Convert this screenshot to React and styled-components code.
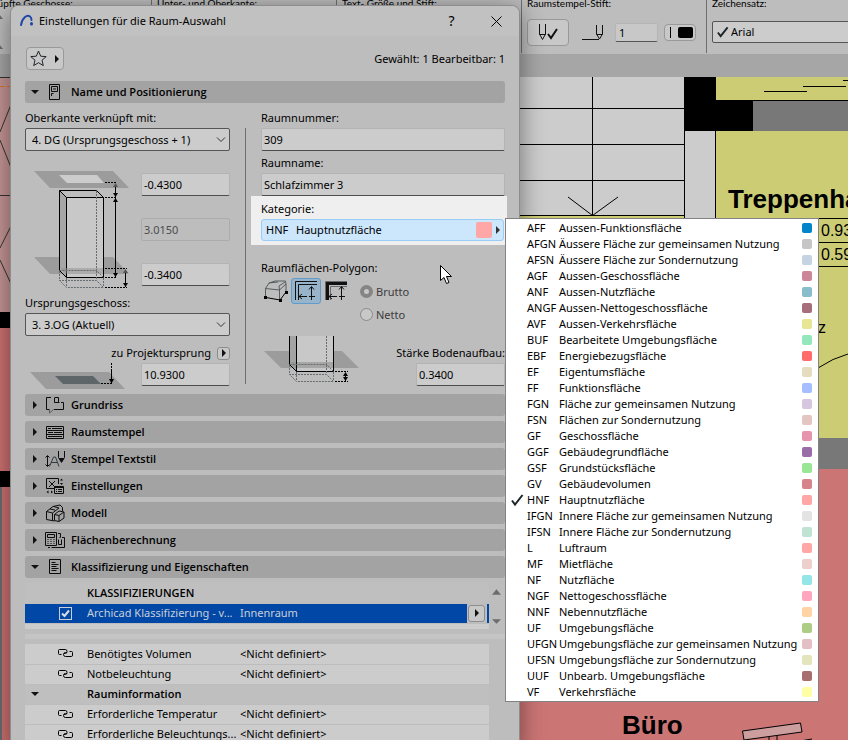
import { Fragment } from "react";
import styled, { createGlobalStyle } from "styled-components";

const GlobalStyle = createGlobalStyle`
  * {
    box-sizing: border-box;
  }
  body {
    margin: 0;
    overflow: hidden;
    color: #000;
    font-family: "Noto Sans", "Open Sans", sans-serif;
    font-size: 11px;
    line-height: 16px;
  }
  button, input, select {
    font: inherit;
    color: inherit;
    margin: 0;
  }
  svg {
    display: block;
    flex: none;
  }
`;

const Desktop = styled.div`
  position: relative;
  display: flex;
  flex-direction: column;
  height: 100vh;
  overflow: hidden;
  background: #cccccc;
`;

/* ---- info bar ---- */
const InfoBar = styled.div`
  display: grid;
  grid-template-columns: repeat(5, 185px);
  flex: none;
  height: 54px;
  margin-left: -34px;
  background: #bdbdbd;
`;
const InfoSection = styled.section`
  height: 53px;
  padding-left: 5px;
  border-left: 1px solid #6f6f6f;
  white-space: nowrap;
`;
const InfoTitle = styled.div`
  display: block;
  height: 16px;
  margin-top: -5px;
  font-family: Lato, "Noto Sans", sans-serif;
  font-size: 10px;
`;
const InfoTools = styled.div`
  display: flex;
  align-items: center;
  height: 42px;
`;
const InfoButton = styled.button`
  display: flex;
  align-items: center;
  justify-content: center;
  width: ${(props) => props.$width}px;
  height: ${(props) => props.$height}px;
  padding: 0;
  border: 1px solid #999999;
  border-radius: 4px;
  background: #c8c8c8;
`;
const PenIcon = styled.svg`
  margin: 0 11px 0 13px;
`;
const PenInput = styled.input`
  width: 43px;
  height: 19px;
  margin-right: 6px;
  padding: 0 3px;
  border: 1px solid #b5b5b5;
  border-bottom-color: #555;
  border-radius: 2px;
  background: #c8c8c8;
`;
const ScrollMarks = styled.div`
  display: flex;
  flex-direction: column;
  gap: 22px;
  margin: 2px 0 0 23px;
`;
const Strip = styled.div`
  flex: none;
  height: 23px;
  background: #a6a6a6;
`;
const Plan = styled.svg`
  flex: 1;
  width: 100%;
  min-height: 0;
  font-family: "Liberation Sans", Arial, sans-serif;
`;

/* ---- dialog ---- */
const Dialog = styled.form`
  position: absolute;
  top: 5px;
  left: 10px;
  bottom: -10px;
  width: calc(100% - 20px);
  max-width: 510px;
  border: 1px solid #8d8d8d;
  border-radius: 8px 8px 0 0;
  background: #bdbdbd;
  box-shadow: 0 4px 24px rgba(0, 0, 0, 0.45);
`;
const TitleBar = styled.header`
  display: flex;
  align-items: center;
  height: 30px;
  padding: 0 0 0 8px;
  border-radius: 8px 8px 0 0;
  background: #c1c1c1;
`;
const Title = styled.h1`
  flex: 1;
  margin: 0 0 0 4px;
  font-size: 11px;
  font-weight: 400;
`;
const TitleButton = styled.button`
  display: flex;
  align-items: center;
  justify-content: center;
  width: 45px;
  height: 30px;
  padding: 0;
  border: 0;
  background: none;
  font-size: 14px;
`;
const Content = styled.div`
  padding: 11px 14px 0;
`;
const TopRow = styled.div`
  display: flex;
  align-items: center;
  justify-content: space-between;
  margin-bottom: 11px;
  padding-left: 1px;
`;
const StarButton = styled.button`
  display: flex;
  align-items: center;
  justify-content: center;
  gap: 6px;
  width: 38px;
  height: 23px;
  padding: 0;
  border: 1px solid #999999;
  border-radius: 4px;
  background: #c8c8c8;
`;
const SectionButton = styled.button`
  display: flex;
  align-items: center;
  gap: 5px;
  width: 100%;
  height: 22px;
  margin-bottom: 5px;
  padding: 0 6px;
  border: 0;
  border-radius: 3px;
  background: #a3a3a3;
  font-family: "Open Sans", "Noto Sans", sans-serif;
  font-weight: 600;
  text-align: left;
`;
const Body = styled.div`
  display: grid;
  grid-template-columns: 205px 1px minmax(0, 1fr);
  column-gap: 15px;
  margin-bottom: 8px;
`;
const Separator = styled.div`
  margin: 20px 0 2px;
  background: #6f6f6f;
`;
const Column = styled.div`
  display: flex;
  flex-direction: column;
`;
const Label = styled.label`
  height: 20px;
  line-height: 20px;
  white-space: nowrap;
`;
const TextInput = styled.input`
  width: 100%;
  height: 23px;
  padding: 0 2px;
  border: 1px solid #b3b3b3;
  border-bottom-color: #4d4d4d;
  border-radius: 2px;
  background: #cccccc;
  &:disabled {
    border-color: #acacac;
    background: #bdbdbd;
    color: #4d4d4d;
  }
`;
const FieldGroup = styled.div`
  display: flex;
  flex-direction: column;
  margin-bottom: 2px;
`;
const SelectWrap = styled.div`
  position: relative;
  flex: 1;
`;
const Select = styled.select`
  appearance: none;
  width: 100%;
  height: ${(props) => props.$height || 23}px;
  padding: 0 24px 0 ${(props) => props.$indent || 6}px;
  border: 1px solid #555;
  border-radius: 2px;
  background: #cccccc;
`;
const SelectMark = styled.svg`
  position: absolute;
  top: 50%;
  ${(props) => (props.$left ? "left: 4px;" : "right: 4px;")}
  transform: translateY(-50%);
  pointer-events: none;
`;
const Heights = styled.div`
  display: grid;
  grid-template-columns: 116px 1fr;
  margin-top: 20px;
`;
const HeightInputs = styled.div`
  display: flex;
  flex-direction: column;
  gap: 22px;
  padding-top: 2px;
  height: 122px;
`;
const OriginRow = styled.div`
  display: flex;
  align-items: center;
  justify-content: flex-end;
  gap: 6px;
  height: 20px;
  margin-top: 7px;
`;
const MiniButton = styled.button`
  display: flex;
  align-items: center;
  justify-content: center;
  width: ${(props) => props.$size}px;
  height: ${(props) => props.$size}px;
  padding: 0;
  border: 1px solid #8d8d8d;
  border-radius: 3px;
  background: #c8c8c8;
`;
const Origin = styled.div`
  display: grid;
  grid-template-columns: 116px 1fr;
  height: 23px;
`;

const Highlight = styled.div`
  margin: -2px -2px 0 -10px;
  padding: 3px 3px 4px 10px;
  background: #efefef;
`;
const Picker = styled.div`
  position: relative;
`;
const PickerButton = styled.button`
  display: flex;
  align-items: center;
  width: 100%;
  height: 22px;
  padding: 0 1px 0 4px;
  border: 1px solid #99cdf7;
  border-radius: 3px;
  background: #cce6fc;
  text-align: left;
`;
const PickerCode = styled.span`
  width: 30px;
`;
const PickerName = styled.span`
  flex: 1;
`;
const Swatch = styled.span`
  width: ${(props) => props.$size}px;
  height: ${(props) => props.$size}px;
  margin-right: ${(props) => (props.$size > 10 ? 2 : 0)}px;
  border-radius: 2px;
  background: ${(props) => props.$color};
`;
const Menu = styled.ul`
  position: absolute;
  z-index: 2;
  top: -1px;
  left: 100%;
  width: 314px;
  margin: 0 0 0 1px;
  padding: 1px 0;
  border: 1px solid #838383;
  background: #ffffff;
  list-style: none;
`;
const MenuItem = styled.button`
  display: grid;
  grid-template-columns: 21px 32px 1fr 10px;
  align-items: center;
  width: 100%;
  height: 16px;
  padding: 0 6px 0 0;
  border: 0;
  background: none;
  text-align: left;
  white-space: nowrap;
`;

const PolygonLabel = styled(Label)`
  margin-top: 13px;
`;
const PolygonRow = styled.div`
  display: flex;
  height: 48px;
`;
const ToolButton = styled.button`
  display: flex;
  align-items: center;
  justify-content: center;
  width: 30px;
  height: 26px;
  padding: 0;
  border: 1px solid ${(props) => (props.$active ? "#5f9bcb" : "transparent")};
  border-radius: 3px;
  background: ${(props) => (props.$active ? "#97b4cb" : "none")};
`;
const Radios = styled.div`
  display: flex;
  flex-direction: column;
  margin-left: 9px;
  padding-top: 2px;
`;
const RadioLabel = styled.label`
  display: flex;
  align-items: center;
  gap: 3px;
  height: 23px;
  color: #3c3c3c;
`;
const Radio = styled.input`
  appearance: none;
  width: 13px;
  height: 13px;
  border: 1px solid #8a8a8a;
  border-radius: 50%;
  background: #c8c8c8;
  &:checked {
    border: 4px solid #858585;
  }
`;
const FloorRow = styled.div`
  display: flex;
  align-items: flex-end;
  justify-content: space-between;
  margin-top: auto;
`;
const FloorField = styled.div`
  display: flex;
  flex-direction: column;
  align-items: flex-end;
  width: 110px;
`;
const FloorInput = styled(TextInput)`
  width: 89px;
`;

/* ---- property lists ---- */
const ClassRow = styled.div`
  display: flex;
  align-items: flex-start;
  height: 46px;
  margin-right: 1px;
  background: #cccccc;
`;
const Table = styled.table`
  flex: 1;
  width: ${(props) => props.$width || "auto"};
  table-layout: fixed;
  border-collapse: collapse;
  background: #cccccc;
  td, th {
    height: 20px;
    padding: 0 0 0 2px;
    overflow: hidden;
    text-align: left;
    text-overflow: ellipsis;
    white-space: nowrap;
  }
  th {
    font-family: "Open Sans", "Noto Sans", sans-serif;
    font-weight: 600;
  }
`;
const Row = styled.tr`
  border-bottom: 1px solid #bdbdbd;
  background: ${(props) => (props.$group ? "#bfbfbf" : props.$selected ? "#0047a6" : "#cccccc")};
  color: ${(props) => (props.$selected ? "#c9cfd8" : "#000")};
`;
const IconCell = styled.div`
  display: flex;
  justify-content: ${(props) => (props.$start ? "flex-start" : "center")};
  padding-left: ${(props) => (props.$start ? 4 : 18)}px;
`;
const Checkbox = styled.input`
  appearance: none;
  width: 13px;
  height: 13px;
  border: 1px solid #c9cfd8;
  background: url("data:image/svg+xml,%3Csvg xmlns='http://www.w3.org/2000/svg' viewBox='0 0 11 11'%3E%3Cpath d='M2 5.5 4.5 8 9 2.5' fill='none' stroke='%23d8dde3' stroke-width='2'/%3E%3C/svg%3E");
`;
const ButtonCell = styled.div`
  display: flex;
  justify-content: center;
  width: 20px;
  margin-left: -2px;
  padding: 1px 0;
  background: #bdbdbd;
`;
const Scroll = styled.div`
  display: flex;
  flex-direction: column;
  align-items: center;
  gap: 20px;
  width: 15px;
  height: 46px;
  padding-top: 5px;
  background: #bdbdbd;
`;
const Gap = styled.div`
  height: 5px;
  margin: 5px 0;
  background: #c4c4c4;
`;

const CATEGORIES = [
  ["AFF", "Aussen-Funktionsfläche", "#0085ca"],
  ["AFGN", "Äussere Fläche zur gemeinsamen Nutzung", "#c6c6c6"],
  ["AFSN", "Äussere Fläche zur Sondernutzung", "#c6d3e3"],
  ["AGF", "Aussen-Geschossfläche", "#cc8599"],
  ["ANF", "Aussen-Nutzfläche", "#8abdcc"],
  ["ANGF", "Aussen-Nettogeschossfläche", "#a66e7c"],
  ["AVF", "Aussen-Verkehrsfläche", "#e6e694"],
  ["BUF", "Bearbeitete Umgebungsfläche", "#94e6bd"],
  ["EBF", "Energiebezugsfläche", "#ff6b6b"],
  ["EF", "Eigentumsfläche", "#e6dcc0"],
  ["FF", "Funktionsfläche", "#a6bdff"],
  ["FGN", "Fläche zur gemeinsamen Nutzung", "#d6c6e0"],
  ["FSN", "Flächen zur Sondernutzung", "#e3c6c2"],
  ["GF", "Geschossfläche", "#e694ad"],
  ["GGF", "Gebäudegrundfläche", "#996ea8"],
  ["GSF", "Grundstücksfläche", "#99e694"],
  ["GV", "Gebäudevolumen", "#d6838b"],
  ["HNF", "Hauptnutzfläche", "#ffa6a6"],
  ["IFGN", "Innere Fläche zur gemeinsamen Nutzung", "#e3e3e3"],
  ["IFSN", "Innere Fläche zur Sondernutzung", "#c0e3d3"],
  ["L", "Luftraum", "#ffa6a6"],
  ["MF", "Mietfläche", "#ebd0cc"],
  ["NF", "Nutzfläche", "#94e6e6"],
  ["NGF", "Nettogeschossfläche", "#ffa6bf"],
  ["NNF", "Nebennutzfläche", "#ffd3a6"],
  ["UF", "Umgebungsfläche", "#adcc85"],
  ["UFGN", "Umgebungsfläche zur gemeinsamen Nutzung", "#e3c0c6"],
  ["UFSN", "Umgebungsfläche zur Sondernutzung", "#e3e6bd"],
  ["UUF", "Unbearb. Umgebungsfläche", "#a66e6e"],
  ["VF", "Verkehrsfläche", "#ffffa6"],
];

const SECTIONS = [
  ["plan", "Grundriss"],
  ["stamp", "Raumstempel"],
  ["text", "Stempel Textstil"],
  ["settings", "Einstellungen"],
  ["model", "Modell"],
  ["calc", "Flächenberechnung"],
];

const PROPERTIES = [
  { name: "Benötigtes Volumen" },
  { name: "Notbeleuchtung" },
  { name: "Rauminformation", group: true },
  { name: "Erforderliche Temperatur" },
  { name: "Erforderliche Beleuchtungs..." },
];

const ICONS = {
  zone: (
    <>
      <path d="M5.500 3.500h10v15h-10z" />
      <path d="M7.500 5.500h6v5h-6zM9 8h3M7.500 15v-2.500h2" />
    </>
  ),
  plan: (
    <>
      <path d="M7 3.500H2.500v12H5M11 3.500h3.500v5M17 8.500h2.500v7H10" />
      <path d="M10.500 3.500v5h5" />
      <path d="M5.500 15v4l4-3.500" stroke="#555d60" />
    </>
  ),
  stamp: (
    <path d="M2.500 5.500h17v12h-17zM2.500 9.500h17M2.500 13.500h17M4 7.500h3M8 7.500h10M4 11.500h5M10 11.500h8M4 15.500h14" />
  ),
  text: (
    <>
      <path d="M3.500 8v10M1.500 9.500l2-2 2 2M1.500 16.500l2 2 2-2" />
      <path d="M5.500 18.500 9.500 9h2l3.500 9.500M7 14.500h6" stroke="#333b3e" />
      <path d="M14.500 3v6.500l3 5 3-5V3M15 10.500h5" />
      <path d="M16 11.500h3l-1.500 2z" fill="#111" />
    </>
  ),
  settings: (
    <>
      <path d="M10 13.500H2.500v-10h12V9M5 6l6 6M11 6l-6 6" />
      <path d="M10.500 11.500h9v7h-9zM10.500 12.500h9M12 14.500h1M14 14.500h4M12 16.500h1M14 16.500h4" />
      <path d="M16 5.500l1.500-2 1.500 2zM16 8l1.500 2L19 8zM4.500 15.500v3l-2-1.500zM7 15.500v3l2-1.500z" fill="#111" strokeWidth="0" />
    </>
  ),
  model: (
    <>
      <path d="M2.500 9.500 9 4.500l7-1.500 2.500 2.500V9M2.500 9.500l6 1.500L15 6M2.500 9.500v8l8 1.500M8.500 11v8M15 6 9.500 4.500M6 7l5 1" />
      <path d="M10.500 12.500 15 9l5 1v6l-5 3.500-4.500-1zM10.500 12.500l4.500 1 5-3.500M15 13.500v6" />
    </>
  ),
  calc: (
    <>
      <path d="M1.500 3.500h11v13h-11zM3.500 5.500h7v3h-7z" />
      <path d="M3.500 10.500h1M6.500 10.500h1M9.500 10.500h1M3.500 12.500h1M6.500 12.500h1M9.500 12.500h1M3.500 14.500h1M6.500 14.500h1M9.500 14.500h1" />
      <path d="M14 4.500h2.500v4h-1M18 8.500h2.500v10h-13M4 18.500h2M14.500 10.500v5h3v-5M17.500 12.500v3" />
    </>
  ),
  props: <path d="M5.500 3.500h11v14h-11zM7.500 6.500h4M7.500 8.500h7M7.500 10.500h5M7.500 12.500h7M7.500 14.500h5" />,
};

function Icon({ name }) {
  return (
    <svg width="22" height="22" viewBox="0 0 22 22" fill="none" stroke="#0c0c0c" aria-hidden="true">
      {ICONS[name]}
    </svg>
  );
}

function Triangle({ dir = "right", color = "#111", size = 8 }) {
  const paths = {
    right: "M2 0v8l4-4z",
    down: "M0 2h8L4 6z",
    up: "M0 6h8L4 1z",
  };
  return (
    <svg width={size} height={size} viewBox="0 0 8 8" aria-hidden="true">
      <path d={paths[dir]} fill={color} />
    </svg>
  );
}

function Check({ size = 14, ...rest }) {
  return (
    <svg width={size} height={size} viewBox="0 0 14 14" fill="none" stroke="#1d2528" strokeWidth="2" {...rest}>
      <path d="M2 7.500 5 11.500 12.500 2" />
    </svg>
  );
}

const MenuCheck = styled(Check)`
  margin-left: 4px;
`;

function Section({ icon, title, open }) {
  return (
    <SectionButton type="button" aria-expanded={!!open}>
      <Triangle dir={open ? "down" : "right"} />
      <Icon name={icon} />
      {title}
    </SectionButton>
  );
}

function DropDown({ id, value }) {
  return (
    <SelectWrap>
      <Select id={id}>
        <option>{value}</option>
      </Select>
      <SelectMark width="10" height="6" viewBox="0 0 10 6" fill="none" stroke="#333">
        <path d="M1 0.500 5 4.500 9 0.500" />
      </SelectMark>
    </SelectWrap>
  );
}

function ZoneHeights() {
  return (
    <svg width="116" height="122" viewBox="25 171 116 122" fill="none" stroke="#000">
      <path d="M34 171h79l16 17H50z" fill="#9c9c9c" stroke="none" />
      <path d="M59 175h38l7 8H67z" fill="#cccccc" stroke="none" />
      <path d="M34 257h79l16 17H50z" fill="#9c9c9c" stroke="none" />
      <path d="M59.500 190.500l7 7v80l-7-7z" fill="#a6a6a6" />
      <path d="M59.500 190.500h37l7 7h-37z" fill="#bdbdbd" />
      <path d="M66.500 197.500h37v80h-37z" fill="#c8c8c8" />
      <path d="M60 268h43v6H67z" fill="#8f8f8f" opacity="0.5" stroke="none" />
      <g stroke="#666c6f" strokeDasharray="2 1">
        <path d="M96.500 191v79.500l7 7M59.500 270.500h37M59.500 271v9.500h37l7 7h-37l-7-7M66.500 278v9M103.500 278v9M96.500 271v9" />
      </g>
      <path
        d="M105 182.500h12M105 197.500h10M105 277.500h11M105 268.500h22M105 287.500h22"
        strokeDasharray="2 1"
      />
      <path d="M115.500 184v93M125.500 270v17" />
      <path d="M113 187l2.500-4 2.500 4z" fill="#555" stroke="none" />
      <path d="M113 193l2.500 4 2.500-4zM113 202l2.500-4 2.500 4zM113 273l2.500 4 2.500-4zM123 283l2.500 4 2.500-4z" fill="#000" stroke="none" />
      <path d="M123 273l2.500-4 2.500 4z" fill="#555" stroke="none" />
    </svg>
  );
}

function OriginDrawing() {
  return (
    <svg width="116" height="26" viewBox="25 363 116 26" fill="none" stroke="#000">
      <path d="M30 372h79l16 17H46z" fill="#9c9c9c" stroke="none" />
      <path d="M55 376h38l8 8H63z" fill="#5e666a" stroke="none" />
      <path d="M101 383.500h11M111.500 363v6" strokeDasharray="2 1" />
      <path d="M111.500 369v14" />
      <path d="M109 379l2.500 4.500 2.500-4.500z" fill="#000" stroke="none" />
    </svg>
  );
}

function FloorDrawing() {
  return (
    <svg width="100" height="50" viewBox="261 336 100 50" fill="none" stroke="#000">
      <path d="M264 351h78l17 17h-78z" fill="#9c9c9c" stroke="none" />
      <path d="M289.500 336v28.500l7 7V336z" fill="#a3a3a3" stroke="none" />
      <path d="M297 336h36v35h-36z" fill="#c8c8c8" stroke="none" />
      <path d="M290 362h43v6h-40z" fill="#8f8f8f" opacity="0.6" stroke="none" />
      <path d="M289.500 336v28.500l7 7V336M296.500 371.500h37V336" />
      <path
        d="M326.500 336v28.500l7 7M289.500 364.500h37M289.500 365v9.500h37l7 7h-37l-7-7M296.500 372v9M333.500 372v9M326.500 365v9"
        stroke="#666c6f"
        strokeDasharray="2 1"
      />
      <path d="M335 371.500h13M335 381.500h13" strokeDasharray="2 1" />
      <path d="M345.500 373v8" />
      <path d="M343 376l2.500-4 2.500 4zM343 377l2.500 4 2.500-4z" fill="#000" stroke="none" />
    </svg>
  );
}

function EdgeIcon({ inner }) {
  return (
    <svg width="24" height="22" viewBox="0 0 24 22" fill="none" stroke="#111">
      {inner ? (
        <>
          <path d="M1.500 20V1.500H23" stroke="#666c6f" />
          <path d="M3.500 20V3.500h19.500" strokeWidth="3" />
          <path d="M6.500 20V6.500H23" stroke="#666c6f" />
        </>
      ) : (
        <path d="M1.500 20V1.500H23M4.500 20V4.500H23" />
      )}
      <path d="M17.500 7v8M15 9.500l2.500-3 2.500 3M5 16.500h8M8 14l-3 2.500L8 19M15 16.500h6M17.500 14v6" />
    </svg>
  );
}

function FloorPlan() {
  return (
    <Plan viewBox="0 77 848 663" preserveAspectRatio="xMinYMin slice" fill="none" stroke="#000">
      <g stroke="none">
        <path d="M0 77h60v235H0z" fill="#c49494" />
        <path d="M0 328h60v412H0z" fill="#cc7070" />
        <path d="M0 312h60v16H0zM0 471h60v16H0z" fill="#000" />
        <path d="M0 487h2v253H0z" fill="#666c70" />
      </g>
      <path d="M0 86.500h4M7 86.500h4" stroke="#d9731a" />
      <path d="M0 132l12-30M0 140l12 30M0 195.500h12M0 248l12-24M0 260l12 26M0 77.500h12" stroke="#333" />
      <g stroke="none">
        <path d="M500 216h185v10H500z" fill="#cccc75" />
        <path d="M716 77h132v361H716z" fill="#cccc75" />
        <path d="M715 438h133v31H715z" fill="#787878" />
        <path d="M500 469h348v271H500z" fill="#cc7575" />
        <path d="M684 77h32v54h-32zM684 101h69v30h-69z" fill="#000" />
        <path d="M753 101h95v30h-95z" fill="#787878" />
      </g>
      <path d="M592.500 77v139M500 108.500h184M500 144.500h184M500 180.500h184M500 215.500h184M684.500 131v100M715.500 131v100M716 100.500h132" />
      <path d="M568 197l24.500 18.500L618 197M764 91.500h43M803 86.500h43M843 80.500h5" />
      <path d="M818 218.500h30M818 242.500h30M818 266.500h30M818 368q15-10 30-14" />
      <g stroke="none" fill="#000">
        <text x="728" y="208" fontSize="26" fontWeight="700">Treppenhaus</text>
        <text x="821" y="236" fontSize="16">0.93</text>
        <text x="821" y="260" fontSize="16">0.59</text>
        <text x="818" y="333" fontSize="16">z</text>
        <text x="622" y="734" fontSize="26" fontWeight="700">Büro</text>
      </g>
      <path d="M742.500 731l58-8 1.500 9-58 8zM769 737v4M777 736v5M800 741l12-2" fill="#cc9e9e" />
    </Plan>
  );
}

function ClassificationTable() {
  return (
    <ClassRow>
      <Table $width="463px">
        <colgroup>
          <col style={{ width: 60 }} />
          <col style={{ width: 153 }} />
          <col />
          <col style={{ width: 22 }} />
        </colgroup>
        <tbody>
          <Row $group>
            <td />
            <th colSpan="3">KLASSIFIZIERUNGEN</th>
          </Row>
          <Row $selected>
            <td>
              <IconCell>
                <Checkbox type="checkbox" defaultChecked aria-label="Archicad Klassifizierung" />
              </IconCell>
            </td>
            <td>Archicad Klassifizierung - v...</td>
            <td>Innenraum</td>
            <td>
              <ButtonCell>
                <MiniButton type="button" $size={17} aria-label="Klassifizierung wählen">
                  <Triangle />
                </MiniButton>
              </ButtonCell>
            </td>
          </Row>
        </tbody>
      </Table>
      <Scroll>
        <Triangle dir="up" color="#6c6c6c" size={9} />
        <Triangle dir="down" color="#6c6c6c" size={9} />
      </Scroll>
    </ClassRow>
  );
}

function PropertyTable() {
  return (
    <Table $width="calc(100% - 16px)">
      <colgroup>
        <col style={{ width: 60 }} />
        <col style={{ width: 153 }} />
        <col />
      </colgroup>
      <tbody>
        {PROPERTIES.map((item) => (
          <Row key={item.name} $group={item.group}>
            <td>
              <IconCell $start={item.group}>
                {item.group ? (
                  <Triangle dir="down" />
                ) : (
                  <svg width="15" height="9" viewBox="0 0 15 9" fill="none" stroke="#000">
                    <path d="M3.500 5.500h-2q-1 0-1-1v-3q0-1 1-1h6q1.500 0 1.500 2t-1.500 2H6M11.500 2.500h2q1 0 1 1v2.500q0 1.500-1 1.500h-6Q5.500 7.500 5.500 5.500t2-2H9" />
                  </svg>
                )}
              </IconCell>
            </td>
            {item.group ? (
              <th colSpan="2">{item.name}</th>
            ) : (
              <Fragment>
                <td>{item.name}</td>
                <td>&lt;Nicht definiert&gt;</td>
              </Fragment>
            )}
          </Row>
        ))}
      </tbody>
    </Table>
  );
}

const Cursor = styled.svg`
  position: absolute;
  z-index: 3;
  top: 265px;
  left: 440px;
`;

function App() {
  return (
    <Desktop>
      <GlobalStyle />
      <InfoBar>
        <InfoSection>
          <InfoTitle>Verknüpfte Geschosse:</InfoTitle>
          <ScrollMarks>
            <Triangle dir="up" color="#6c6c6c" />
            <Triangle dir="up" color="#6c6c6c" />
          </ScrollMarks>
        </InfoSection>
        <InfoSection>
          <InfoTitle>Unter- und Oberkante:</InfoTitle>
        </InfoSection>
        <InfoSection>
          <InfoTitle>Text- Größe und Stift:</InfoTitle>
        </InfoSection>
        <InfoSection>
          <InfoTitle as="label" htmlFor="pen">Raumstempel-Stift:</InfoTitle>
          <InfoTools>
            <InfoButton type="button" $width={42} $height={27} aria-label="Stift übernehmen">
              <svg width="22" height="20" viewBox="0 0 22 20" fill="none" stroke="#111">
                <path d="M2.500 2v10l3 5.500 3-5.500V2M2.500 12.500h6" />
                <path d="M11 12l3 4 6-9" strokeWidth="2" />
              </svg>
            </InfoButton>
            <PenIcon width="22" height="18" viewBox="0 0 22 18" fill="none" stroke="#111">
              <path d="M0 16.500h17M14.500 2v9l3 5 3-5V2M14.500 11.500h6" />
            </PenIcon>
            <PenInput id="pen" defaultValue="1" />
            <InfoButton type="button" $width={32} $height={17} aria-label="Stiftfarbe">
              <svg width="26" height="13" viewBox="0 0 26 13">
                <path d="M3.500 1v11" stroke="#000" />
                <rect x="11" y="1" width="15" height="11" rx="2" />
              </svg>
            </InfoButton>
          </InfoTools>
        </InfoSection>
        <InfoSection>
          <InfoTitle as="label" htmlFor="font">Zeichensatz:</InfoTitle>
          <InfoTools>
            <SelectWrap>
              <Select id="font" $height={22} $indent={18}>
                <option>Arial</option>
              </Select>
              <SelectMark as={Check} $left size={13} />
            </SelectWrap>
          </InfoTools>
        </InfoSection>
      </InfoBar>
      <Strip />
      <FloorPlan />

      <Dialog>
        <TitleBar>
          <svg width="16" height="16" viewBox="0 0 16 16" fill="none" stroke="#1f48a8" strokeWidth="2" strokeLinecap="round">
            <path d="M2 12C3 5 8 1 11 3.500q1.500 1 1.500 3.500" />
            <path d="M12.500 10.500v.500" strokeWidth="3" />
          </svg>
          <Title>Einstellungen für die Raum-Auswahl</Title>
          <TitleButton type="button" aria-label="Hilfe">?</TitleButton>
          <TitleButton type="button" aria-label="Schließen">
            <svg width="11" height="11" viewBox="0 0 11 11" stroke="#000">
              <path d="M0.500 0.500l10 10M10.500 0.500l-10 10" />
            </svg>
          </TitleButton>
        </TitleBar>
        <Content>
          <TopRow>
            <StarButton type="button" aria-label="Favoriten">
              <svg width="17" height="17" viewBox="0 0 17 17" fill="none" stroke="#1d2528">
                <path d="M8.500 1l2.200 5.200 5.500.400-4.200 3.600 1.300 5.400-4.800-2.900-4.800 2.900L5 10.200.800 6.600l5.500-.400z" />
              </svg>
              <Triangle />
            </StarButton>
            <span>Gewählt: 1 Bearbeitbar: 1</span>
          </TopRow>
          <Section icon="zone" title="Name und Positionierung" open />
          <Body>
            <Column>
              <Label htmlFor="top">Oberkante verknüpft mit:</Label>
              <DropDown id="top" value="4. DG (Ursprungsgeschoss + 1)" />
              <Heights>
                <ZoneHeights />
                <HeightInputs>
                  <TextInput defaultValue="-0.4300" aria-label="Versatz oben" />
                  <TextInput defaultValue="3.0150" aria-label="Höhe" disabled />
                  <TextInput defaultValue="-0.3400" aria-label="Versatz unten" />
                </HeightInputs>
              </Heights>
              <Label htmlFor="home">Ursprungsgeschoss:</Label>
              <DropDown id="home" value="3. 3.OG (Aktuell)" />
              <OriginRow>
                <Label htmlFor="origin">zu Projektursprung</Label>
                <MiniButton type="button" $size={13} aria-label="Bezug wählen">
                  <Triangle />
                </MiniButton>
              </OriginRow>
              <Origin>
                <OriginDrawing />
                <TextInput id="origin" defaultValue="10.9300" />
              </Origin>
            </Column>
            <Separator />
            <Column>
              <FieldGroup>
                <Label htmlFor="number">Raumnummer:</Label>
                <TextInput id="number" defaultValue="309" />
              </FieldGroup>
              <FieldGroup>
                <Label htmlFor="name">Raumname:</Label>
                <TextInput id="name" defaultValue="Schlafzimmer 3" />
              </FieldGroup>
              <Highlight>
                <Label as="div" id="category">Kategorie:</Label>
                <Picker>
                  <PickerButton type="button" aria-labelledby="category">
                    <PickerCode>HNF</PickerCode>
                    <PickerName>Hauptnutzfläche</PickerName>
                    <Swatch $size={16} $color="#ffa6a6" />
                    <Triangle color="#333" />
                  </PickerButton>
                  <Menu>
                    {CATEGORIES.map(([code, name, color]) => (
                      <li key={code}>
                        <MenuItem type="button">
                          <span>{code === "HNF" && <MenuCheck />}</span>
                          <span>{code}</span>
                          <span>{name}</span>
                          <Swatch $size={10} $color={color} />
                        </MenuItem>
                      </li>
                    ))}
                  </Menu>
                </Picker>
              </Highlight>
              <PolygonLabel as="div">Raumflächen-Polygon:</PolygonLabel>
              <PolygonRow>
                <ToolButton type="button" aria-label="Manuell">
                  <svg width="26" height="24" viewBox="0 0 26 24" fill="none" stroke="#555d60">
                    <path d="M2.500 18V9.500L6 4l6-2h10.500l.500 3v8M2.500 9.500l14 1.500L23 5M16.500 11v10M6 4l9-1M16.500 11l-.500-4 6-4" />
                    <path d="M3 18.500l14 2.500 6-8" stroke="#000" />
                    <path d="M1 17h3v3H1zM16 20h3v3h-3zM22 12h3v3h-3z" fill="#000" stroke="none" />
                  </svg>
                </ToolButton>
                <ToolButton type="button" $active aria-label="Innenkante">
                  <EdgeIcon />
                </ToolButton>
                <ToolButton type="button" aria-label="Referenzlinie">
                  <EdgeIcon inner />
                </ToolButton>
                <Radios>
                  <RadioLabel>
                    <Radio type="radio" name="area" defaultChecked />
                    Brutto
                  </RadioLabel>
                  <RadioLabel>
                    <Radio type="radio" name="area" />
                    Netto
                  </RadioLabel>
                </Radios>
              </PolygonRow>
              <FloorRow>
                <FloorDrawing />
                <FloorField>
                  <Label htmlFor="floor">Stärke Bodenaufbau:</Label>
                  <FloorInput id="floor" defaultValue="0.3400" />
                </FloorField>
              </FloorRow>
            </Column>
          </Body>
          {SECTIONS.map(([icon, title]) => (
            <Section key={icon} icon={icon} title={title} />
          ))}
          <Section icon="props" title="Klassifizierung und Eigenschaften" open />
          <ClassificationTable />
          <Gap />
          <PropertyTable />
        </Content>
      </Dialog>
      <Cursor width="13" height="20" viewBox="0 0 13 20" fill="#fff" stroke="#000">
        <path d="M0.500 0.500v15l3.500-3 2.500 6 2.500-1-2.500-6h5z" />
      </Cursor>
    </Desktop>
  );
}

export default App;
